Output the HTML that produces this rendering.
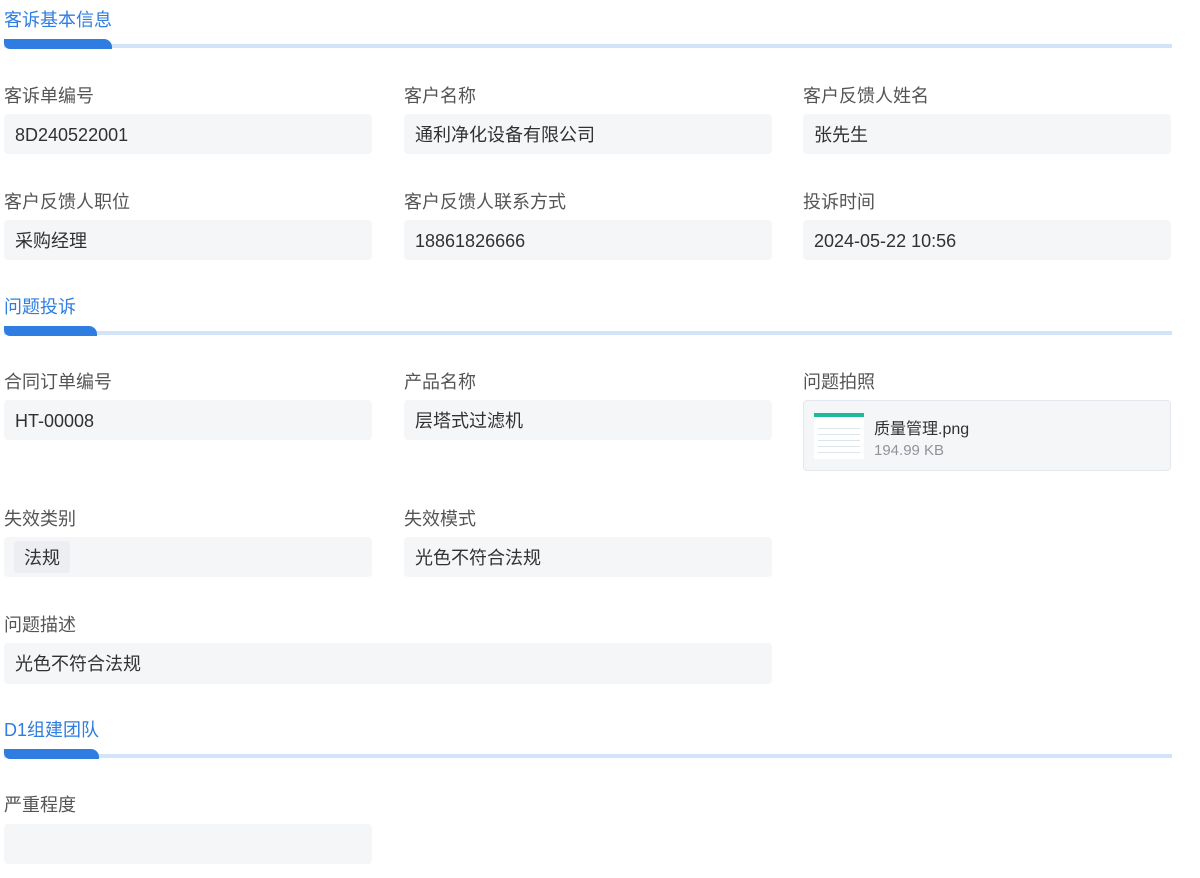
<html><head><style>
body{margin:0;width:1200px;height:878px;background:#fff;font-family:"Liberation Sans","Noto Sans CJK SC",sans-serif;position:relative;overflow:hidden}
.t{position:absolute;left:4px;font-size:18px;color:#2f7de1;line-height:22px}
.bl{position:absolute;left:4px;width:1168px;height:4px;background:#d3e4f9}
.bb{position:absolute;left:4px;height:10px;background:#2f7de1;border-radius:0 8px 0 6px}
.l{position:absolute;font-size:18px;color:#555;line-height:22px}
.v{position:absolute;height:40px;width:368px;background:#f5f6f8;border-radius:4px;font-size:18px;color:#303133;line-height:42px;padding-left:11px;box-sizing:border-box}
</style></head><body>
<div class="t" style="top:9px">客诉基本信息</div><div class="bl" style="top:44px"></div><div class="bb" style="top:39px;width:108px"></div>
<div class="l" style="left:4px;top:85px">客诉单编号</div><div class="v" style="left:4px;top:114px">8D240522001</div>
<div class="l" style="left:404px;top:85px">客户名称</div><div class="v" style="left:404px;top:114px">通利净化设备有限公司</div>
<div class="l" style="left:803px;top:85px">客户反馈人姓名</div><div class="v" style="left:803px;top:114px">张先生</div>
<div class="l" style="left:4px;top:191px">客户反馈人职位</div><div class="v" style="left:4px;top:220px">采购经理</div>
<div class="l" style="left:404px;top:191px">客户反馈人联系方式</div><div class="v" style="left:404px;top:220px">18861826666</div>
<div class="l" style="left:803px;top:191px">投诉时间</div><div class="v" style="left:803px;top:220px">2024-05-22 10:56</div>
<div class="t" style="top:296px">问题投诉</div><div class="bl" style="top:331px"></div><div class="bb" style="top:326px;width:93px"></div>
<div class="l" style="left:4px;top:371px">合同订单编号</div><div class="v" style="left:4px;top:400px">HT-00008</div>
<div class="l" style="left:404px;top:371px">产品名称</div><div class="v" style="left:404px;top:400px">层塔式过滤机</div>
<div class="l" style="left:803px;top:371px">问题拍照</div>
<div style="position:absolute;left:803px;top:400px;width:368px;height:71px;background:#f5f6f8;border:1px solid #e4e7ed;border-radius:4px;box-sizing:border-box">
<div style="position:absolute;left:10px;top:12px;width:50px;height:46px;background:#fff"><div style="height:4px;background:#1fb89a"></div>
<div style="margin:6px 4px;height:30px;background:repeating-linear-gradient(#fff 0 5px,#dde4ea 5px 6px)"></div></div>
<div style="position:absolute;left:70px;top:14px;font-size:16px;color:#303133">质量管理.png</div>
<div style="position:absolute;left:70px;top:41px;font-size:15px;color:#909399">194.99 KB</div></div>
<div class="l" style="left:4px;top:508px">失效类别</div><div class="v" style="left:4px;top:537px"><span style="position:absolute;left:10px;top:4px;width:56px;height:32px;background:#eceef2;border-radius:3px;line-height:34px;text-align:center">法规</span></div>
<div class="l" style="left:404px;top:508px">失效模式</div><div class="v" style="left:404px;top:537px">光色不符合法规</div>
<div class="l" style="left:4px;top:614px">问题描述</div><div class="v" style="left:4px;top:643px;width:768px;height:41px">光色不符合法规</div>
<div class="t" style="top:719px">D1组建团队</div><div class="bl" style="top:754px"></div><div class="bb" style="top:749px;width:95px"></div>
<div class="l" style="left:4px;top:794px">严重程度</div><div class="v" style="left:4px;top:824px"></div>
</body></html>
